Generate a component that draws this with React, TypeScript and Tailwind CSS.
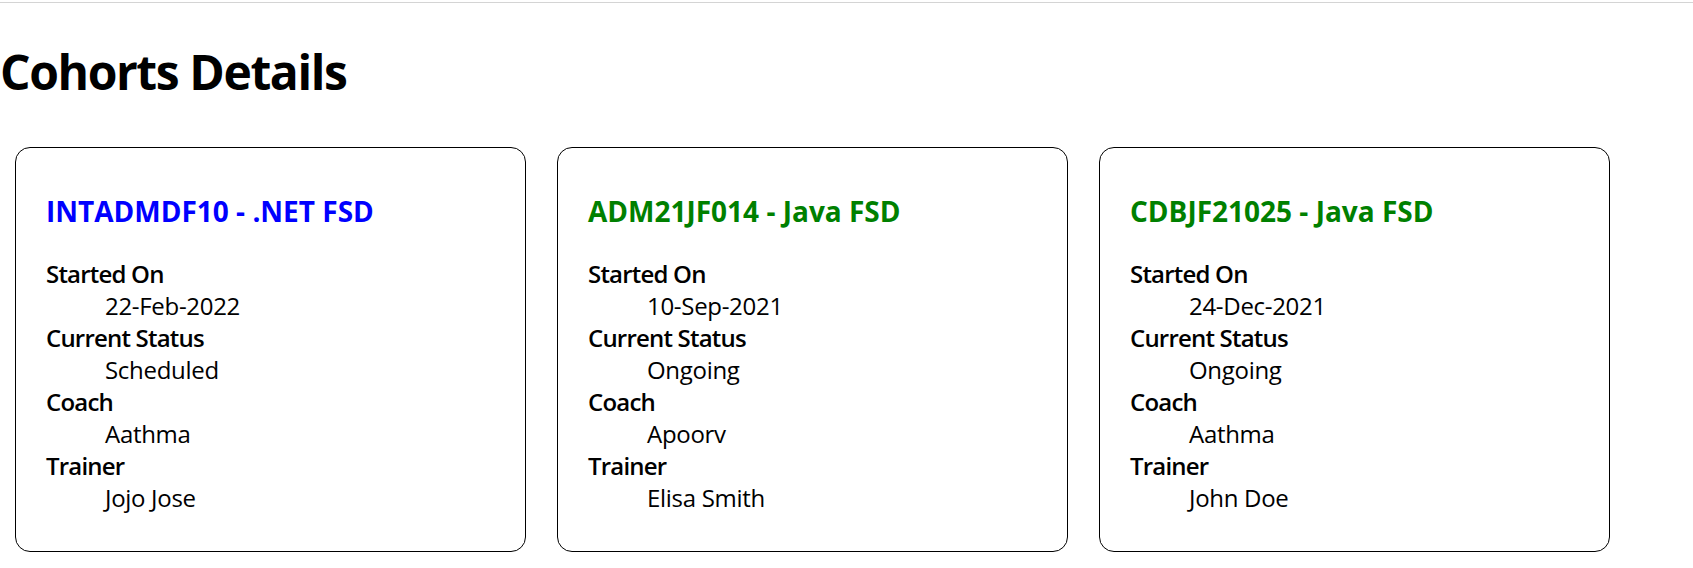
import React from "react";

type Cohort = {
  code: string;
  name: string;
  startedOn: string;
  status: string;
  coach: string;
  trainer: string;
};

const cohorts: Cohort[] = [
  { code: "INTADMDF10", name: ".NET FSD", startedOn: "22-Feb-2022", status: "Scheduled", coach: "Aathma", trainer: "Jojo Jose" },
  { code: "ADM21JF014", name: "Java FSD", startedOn: "10-Sep-2021", status: "Ongoing", coach: "Apoorv", trainer: "Elisa Smith" },
  { code: "CDBJF21025", name: "Java FSD", startedOn: "24-Dec-2021", status: "Ongoing", coach: "Aathma", trainer: "John Doe" },
];

function CohortCard({ cohort }: { cohort: Cohort }) {
  const rows = [
    ["Started On", cohort.startedOn],
    ["Current Status", cohort.status],
    ["Coach", cohort.coach],
    ["Trainer", cohort.trainer],
  ];

  return (
    <div className="w-[511px] h-[405px] shrink-0 rounded-[15px] border border-black pl-[30px] pt-[45px]">
      <h3
        className={
          cohort.status === "Scheduled"
            ? "text-[28px] leading-[36px] font-bold text-[#0000ff]"
            : "text-[28px] leading-[36px] font-bold text-[#008000]"
        }
      >
        {cohort.code} - {cohort.name}
      </h3>
      <dl className="mt-[29px] text-[24px] leading-[32px]">
        {rows.map(([label, value]) => (
          <React.Fragment key={label}>
            <dt className="font-semibold tracking-[-0.8px]">{label}</dt>
            <dd className="ml-[59px] tracking-[-0.3px]">{value}</dd>
          </React.Fragment>
        ))}
      </dl>
    </div>
  );
}

export default function App() {
  return (
    <div className="min-h-screen bg-white text-black font-['Open_Sans',sans-serif]">
      <div className="pt-[2px]">
        <div className="h-px bg-[#d4d4d4]" />
      </div>
      <h1 className="mt-[37px] text-[48px] leading-[64px] font-bold tracking-[-1.4px]">Cohorts Details</h1>
      <div className="mt-[43px] ml-[15px] flex gap-[31px]">
        {cohorts.map((c) => (
          <CohortCard key={c.code} cohort={c} />
        ))}
      </div>
    </div>
  );
}
